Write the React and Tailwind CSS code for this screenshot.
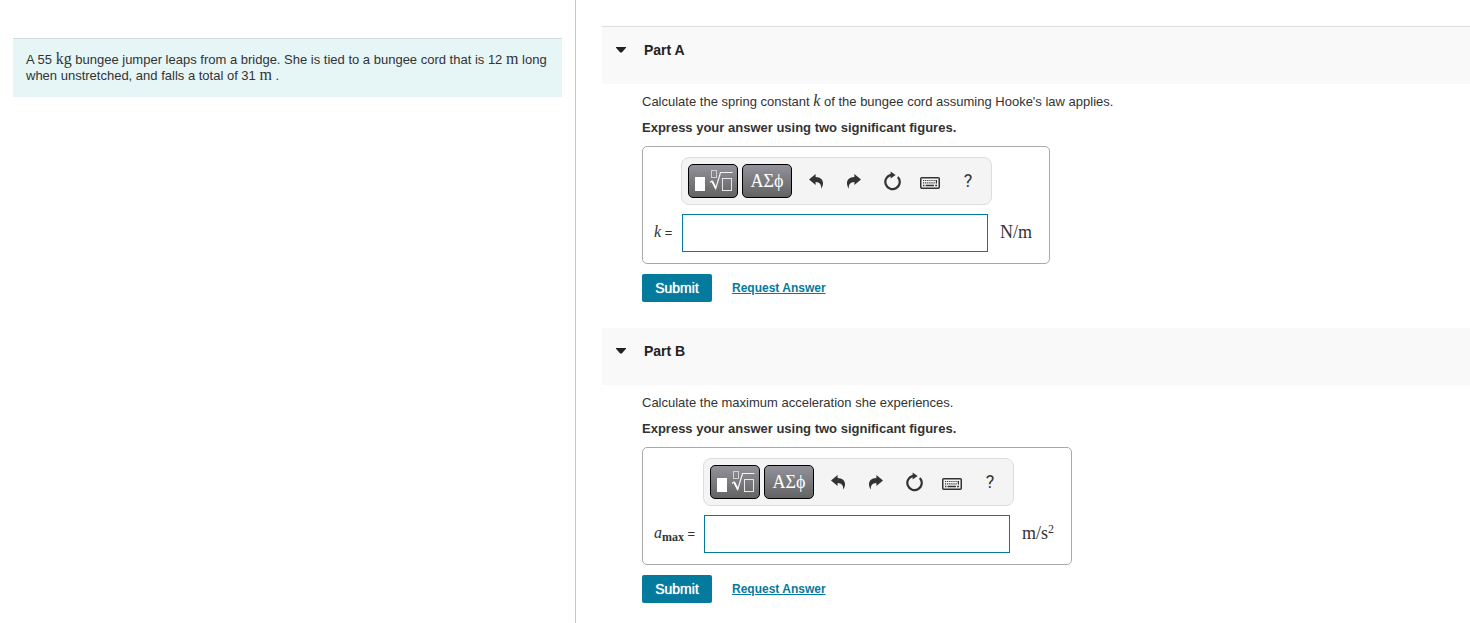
import React from "react";

const serif = "font-['Liberation_Serif',serif]";
const inlineMath = "font-['Liberation_Serif',serif] text-base leading-[14px]";

function TemplatesIcon() {
  return (
    <svg width="40" height="24" viewBox="0 0 40 24" fill="none" aria-hidden="true">
      <rect x="2" y="8" width="10" height="14" fill="#fff" />
      <rect x="18.5" y="1.5" width="5" height="7" stroke="#d0d0d3" />
      <path d="M17 13.5 L19 12 L22.7 19.5 L27.5 3.5 H39.5" stroke="#f4f4f4" strokeWidth="1.2" />
      <path d="M19.3 12.3 L22.7 19" stroke="#fff" strokeWidth="1.8" />
      <rect x="29.5" y="9.5" width="9" height="12" stroke="#e8e8ea" />
    </svg>
  );
}

function UndoIcon({ flip = false }) {
  return (
    <svg
      width="14"
      height="15"
      viewBox="0 0 14 15"
      fill="#333"
      aria-hidden="true"
      className={flip ? "-scale-x-100" : ""}
    >
      <path d="M0 5.4 L6.6 0 V3 C11.6 3.2 14.2 6 14 9.6 C13.9 11.6 13.2 13.3 12.2 14.8 C12.4 10.6 11 8.3 6.6 8.1 V11 Z" />
    </svg>
  );
}

function ResetIcon() {
  return (
    <svg width="18" height="20" viewBox="0 0 18 20" fill="none" aria-hidden="true">
      <path d="M14.8 6 A7.2 7.2 0 1 1 8.5 3.8" stroke="#333" strokeWidth="2.2" />
      <path d="M7.6 0.4 L12.6 4 L7.6 7.4 Z" fill="#333" />
    </svg>
  );
}

function KeyboardIcon() {
  return (
    <svg width="20" height="12" viewBox="0 0 20 12" fill="none" aria-hidden="true">
      <rect x="0.75" y="0.75" width="18.5" height="10.5" rx="1" stroke="#333" strokeWidth="1.5" />
      <path d="M3 3.5 H17" stroke="#333" strokeWidth="1.2" strokeDasharray="1.2 0.9" />
      <path d="M3 5.8 H15" stroke="#333" strokeWidth="1.2" strokeDasharray="1.2 0.9" />
      <path d="M16.4 3 V6.5" stroke="#333" strokeWidth="1.2" />
      <path d="M3 8.5 H4.4 M5.6 8.5 H14 M15.2 8.5 H17" stroke="#333" strokeWidth="1.3" />
    </svg>
  );
}

function MathButton({ label, children }) {
  return (
    <button
      type="button"
      aria-label={label}
      className="flex h-[34px] w-[50px] shrink-0 items-center justify-center rounded-[5px] border border-black bg-gradient-to-b from-[#94929b] to-[#636363] text-white"
    >
      {children}
    </button>
  );
}

function ToolButton({ label, children }) {
  return (
    <button type="button" aria-label={label} className="flex h-[34px] w-[38px] shrink-0 items-center justify-center">
      {children}
    </button>
  );
}

function Toolbar() {
  return (
    <div
      role="toolbar"
      aria-label="Equation tools"
      className="flex h-12 w-[311px] items-center rounded-lg border border-[#ddd] bg-[#f4f4f4] pl-1.5"
    >
      <div className="mr-[5px] flex gap-1">
        <MathButton label="Templates">
          <TemplatesIcon />
        </MathButton>
        <MathButton label="Symbols">
          <span className={`${serif} text-lg leading-5`}>ΑΣϕ</span>
        </MathButton>
      </div>
      <ToolButton label="Undo">
        <UndoIcon />
      </ToolButton>
      <ToolButton label="Redo">
        <UndoIcon flip />
      </ToolButton>
      <ToolButton label="Reset">
        <ResetIcon />
      </ToolButton>
      <ToolButton label="Keyboard shortcuts">
        <span className="pt-1">
          <KeyboardIcon />
        </span>
      </ToolButton>
      <ToolButton label="Help">
        <span className="font-[Roboto,sans-serif] text-lg leading-5 text-[#333]">?</span>
      </ToolButton>
    </div>
  );
}

function Part({ id, title, first = false, question, label, labelWidth, unit }) {
  return (
    <section className={first ? "" : "mt-[26px]"}>
      <h2 className={`bg-[#f9f9f9] ${first ? "border-t border-[#ddd]" : ""}`}>
        <button type="button" aria-expanded="true" className="flex h-[57px] w-full items-start pt-3.5 pl-3.5 text-left">
          <svg width="10" height="6" viewBox="0 0 10 6" fill="#222" aria-hidden="true" className="mt-1.5">
            <path d="M0 0 H10 V0.8 L5.8 5.6 H4.2 L0 0.8 Z" />
          </svg>
          <span className="ml-[18px] text-sm leading-[18px] font-bold text-[#222]">{title}</span>
        </button>
      </h2>
      <div className="pl-10 text-[13px] leading-4 text-[#333]">
        <p className="pt-2.5">{question}</p>
        <p className="mt-2.5 font-bold">Express your answer using two significant figures.</p>
        <div className="mt-2.5 flex w-fit items-end rounded-[5px] border border-[#aaa] pt-2.5 pr-[17px] pb-[11px] pl-[11px]">
          <label htmlFor={id} className={`${labelWidth} flex h-[38px] items-center`}>
            {label}
          </label>
          <div>
            <Toolbar />
            <input
              id={id}
              type="text"
              className="mt-[9px] ml-px block h-[38px] w-[306px] border border-[#047a9c] bg-white px-2 text-base outline-none"
            />
          </div>
          <span className={`${serif} ml-2 flex h-[38px] items-center pb-[3px] text-lg`}>{unit}</span>
        </div>
        <div className="mt-2.5 flex items-center gap-5">
          <button type="button" className="h-7 w-[70px] rounded-xs bg-[#047a9c] text-sm text-white [text-shadow:0_0_1px_#fff]">
            Submit
          </button>
          <a href="#request" className="text-xs font-bold text-[#047a9c] underline">
            Request Answer
          </a>
        </div>
      </div>
    </section>
  );
}

export default function App() {
  return (
    <div className="flex min-h-screen bg-white font-['Liberation_Sans',Arial,sans-serif]">
      <aside className="w-[576px] shrink-0 border-r border-[#c0c8d2] pt-[38px] pr-[13px] pl-[13px]">
        <p className="border-t border-[#d5dcdd] bg-[#e6f5f6] pt-[13px] pr-3 pb-[13px] pl-[13px] text-[13px] leading-4 text-[#333]">
          A 55 <span className={inlineMath}>kg</span> bungee jumper leaps from a bridge. She is tied to a bungee cord that
          is 12 <span className={inlineMath}>m</span> long when unstretched, and falls a total of 31{" "}
          <span className={inlineMath}>m</span> .
        </p>
      </aside>
      <main className="min-w-0 flex-1 pt-[26px] pl-[26px]">
        <Part
          id="spring-constant"
          title="Part A"
          first
          question={
            <>
              Calculate the spring constant <i className={inlineMath}>k</i> of the bungee cord assuming Hooke's law
              applies.
            </>
          }
          label={
            <span>
              <i className={inlineMath}>k</i> =
            </span>
          }
          labelWidth="w-[27px]"
          unit="N/m"
        />
        <Part
          id="max-acceleration"
          title="Part B"
          question="Calculate the maximum acceleration she experiences."
          label={
            <span>
              <i className={inlineMath}>a</i>
              <sub className={`${serif} text-xs font-bold`}>max</sub> =
            </span>
          }
          labelWidth="w-[49px]"
          unit={
            <span>
              m/s<sup className="text-xs">2</sup>
            </span>
          }
        />
      </main>
    </div>
  );
}
